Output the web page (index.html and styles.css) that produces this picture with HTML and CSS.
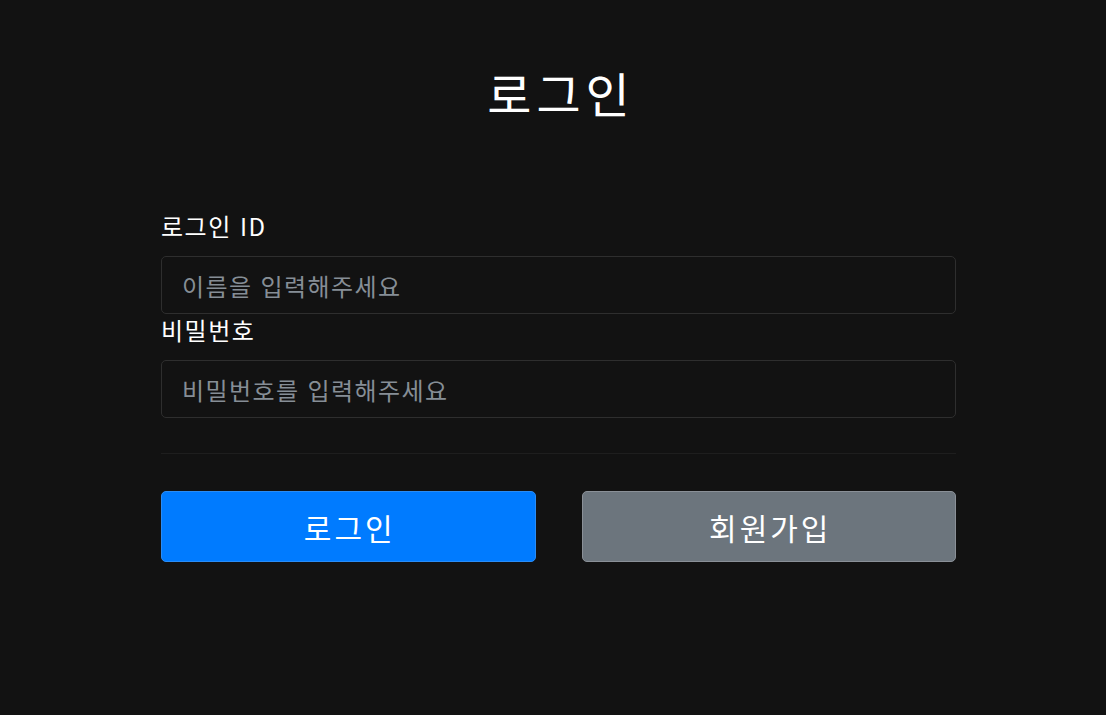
FILE: index.html
```html
<!DOCTYPE html>
<html lang="ko">
<head>
<meta charset="utf-8">
<title>로그인</title>
<link rel="stylesheet" href="styles.css">
</head>
<body>
<div class="page">
  <h1 class="title">로그인</h1>
  <form class="form">
    <div class="field">
      <label class="label" for="loginId">로그인 ID</label>
      <input class="input" id="loginId" type="text" placeholder="이름을 입력해주세요">
    </div>
    <div class="field">
      <label class="label" for="password">비밀번호</label>
      <input class="input" id="password" type="password" placeholder="비밀번호를 입력해주세요">
    </div>
    <hr class="divider">
    <div class="actions">
      <button class="btn btn-primary" type="button">로그인</button>
      <button class="btn btn-secondary" type="button">회원가입</button>
    </div>
  </form>
</div>
</body>
</html>
```

FILE: styles.css
```css
html, body {
  margin: 0;
  padding: 0;
  background: #121212;
  color: #ffffff;
  font-family: "Noto Sans CJK KR", "Noto Sans", sans-serif;
}

.page {
  padding: 63px 0 0 11px;
}

.title {
  margin: 0 0 89px;
  text-align: center;
  font-size: 48px;
  font-weight: 400;
  line-height: 58px;
  letter-spacing: 5px;
  text-indent: 5px;
}

.form {
  width: 795px;
  margin: 0 auto;
}

.field {
  display: flex;
  flex-direction: column;
}

.label {
  font-size: 24px;
  line-height: 32px;
  margin-bottom: 14px;
  letter-spacing: 1.5px;
}

.input {
  box-sizing: border-box;
  height: 58px;
  padding: 0 20px;
  background: #121212;
  border: 1px solid #2e2e2e;
  border-radius: 5px;
  color: #fff;
  font-family: inherit;
  font-size: 24px;
  letter-spacing: 1.4px;
  outline: none;
}

.input::placeholder {
  color: #868e96;
}

.divider {
  margin: 35px 0 37px;
  border: 0;
  border-top: 1px solid #1e1e1e;
}

.actions {
  display: flex;
  gap: 46px;
}

.btn {
  flex: 1;
  height: 71px;
  border-radius: 5px;
  font-family: inherit;
  font-size: 30px;
  letter-spacing: 3px;
  text-indent: 3px;
  color: #fff;
  cursor: pointer;
}

.btn-primary {
  background: #007bff;
  border: 1px solid #2a8cf5;
}

.btn-secondary {
  background: #6c757d;
  border: 1px solid #8a9097;
}
```
